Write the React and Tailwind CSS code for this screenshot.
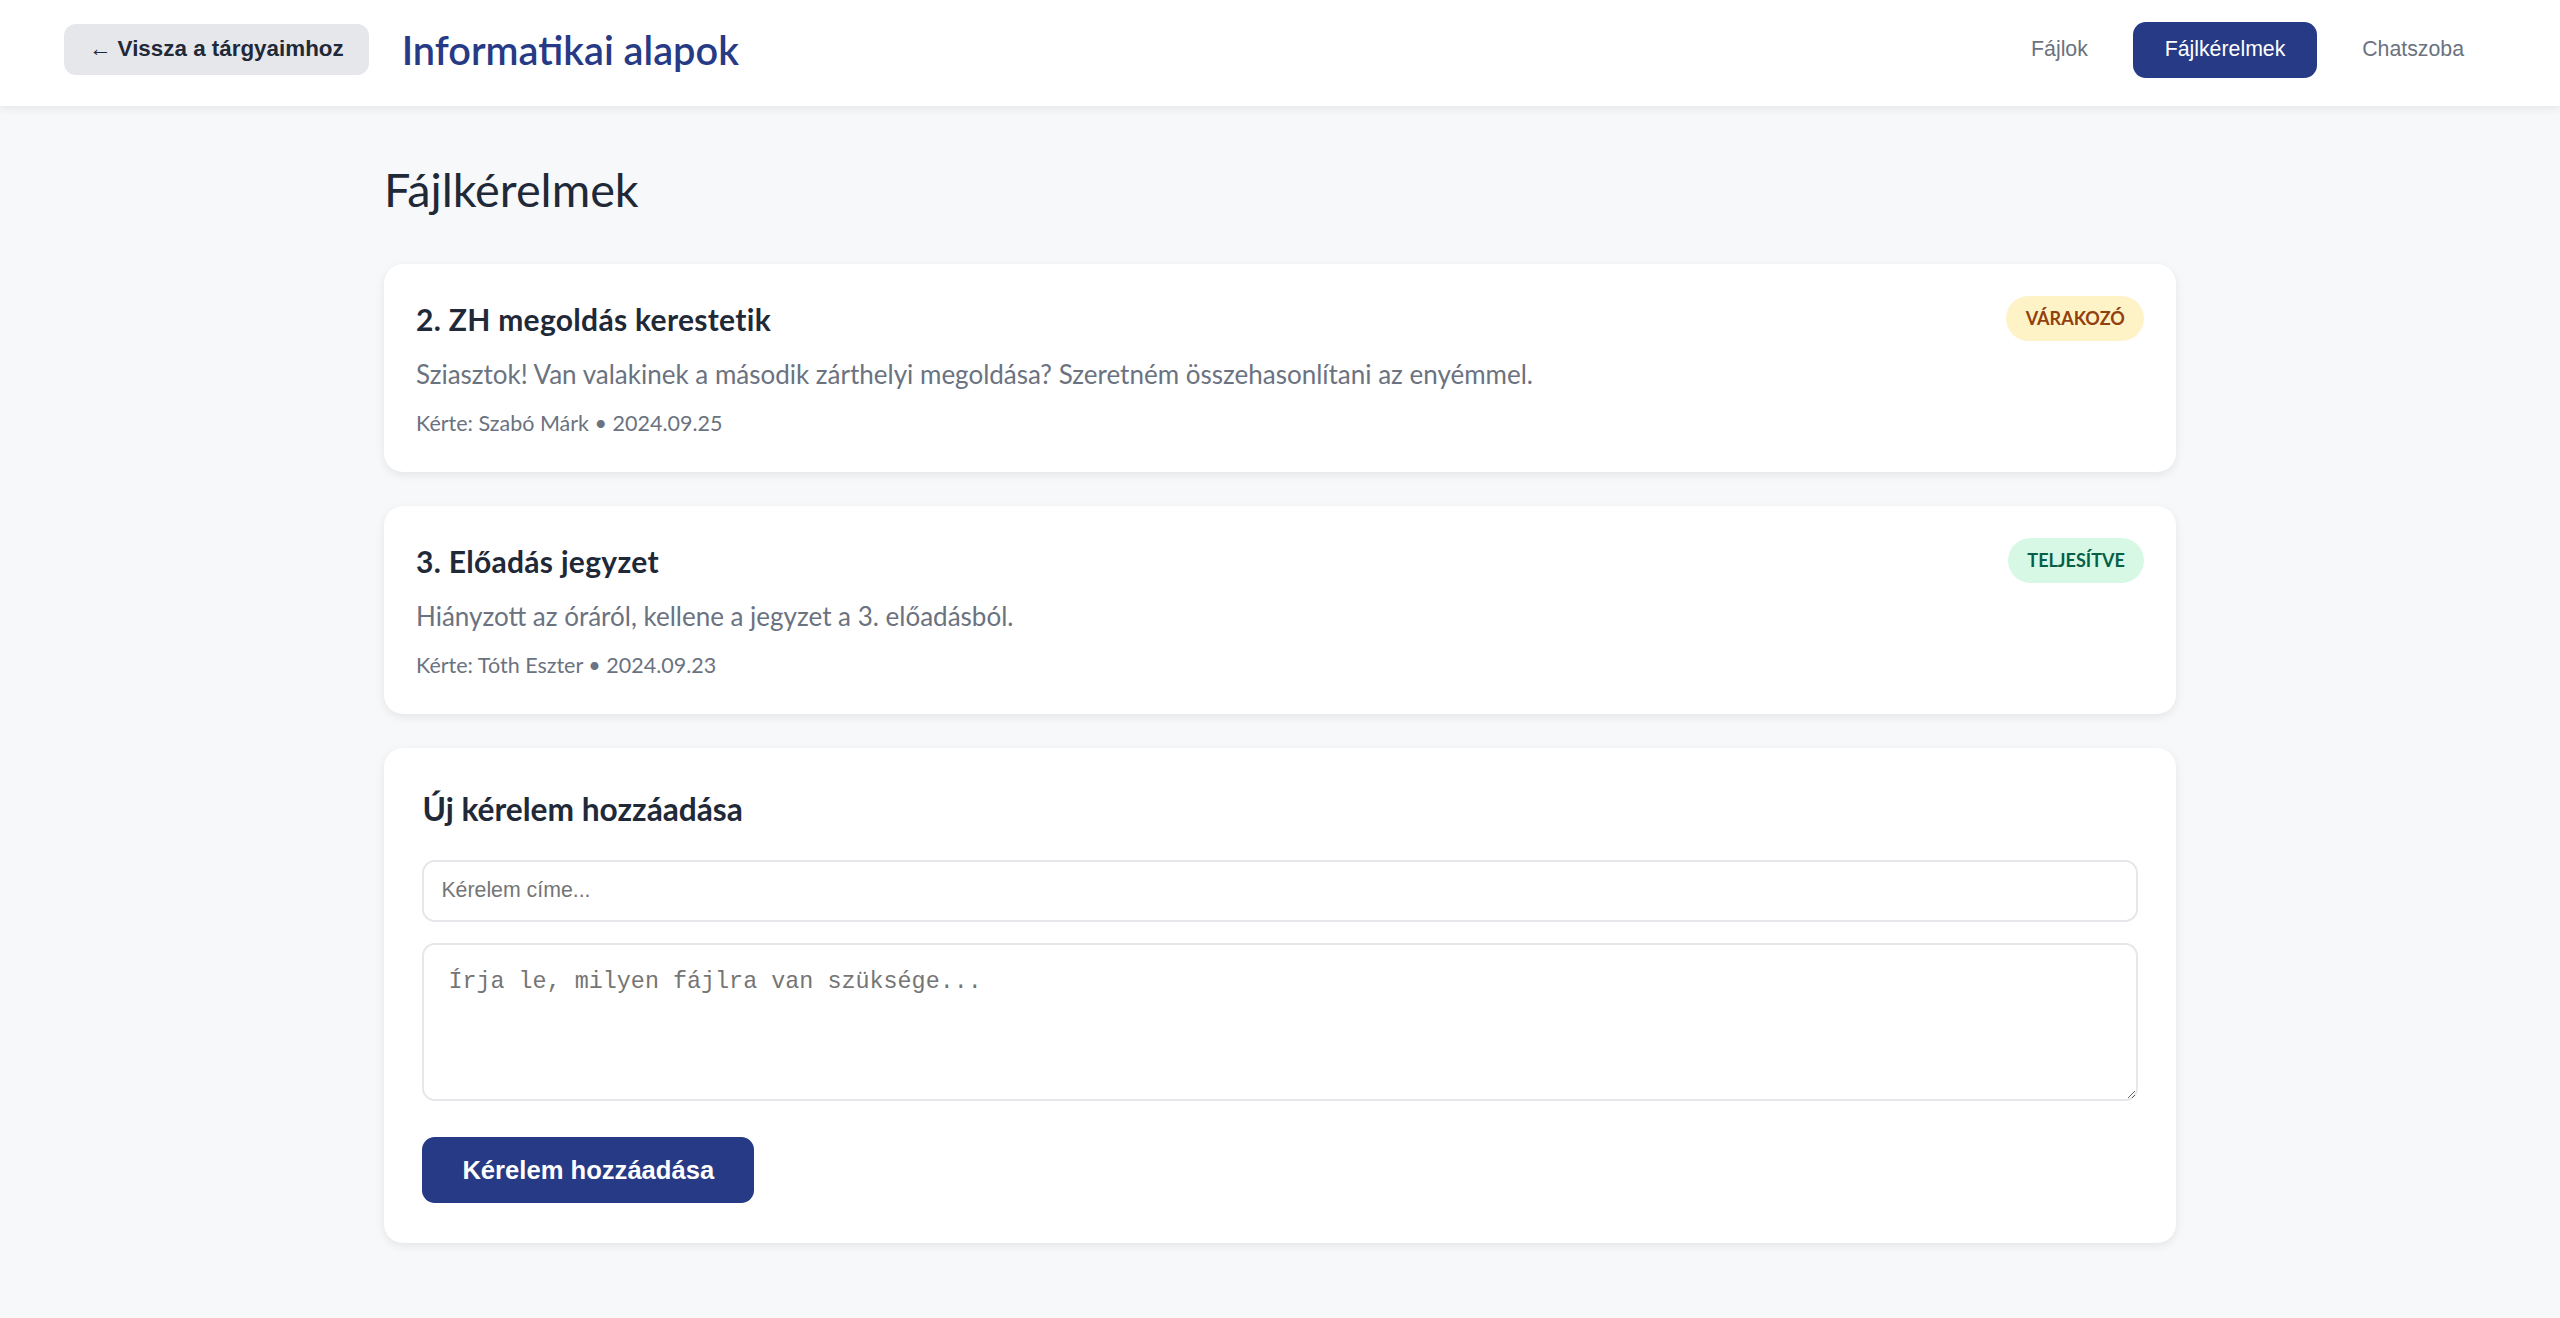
import React from "react"

// ==================== adatok ====================
const requests = [
  {
    id: 2,
    title: "2. ZH megoldás kerestetik",
    text: "Sziasztok! Van valakinek a második zárthelyi megoldása? Szeretném összehasonlítani az enyémmel.",
    by: "Szabó Márk",
    date: "2024.09.25",
    status: "pending",
  },
  {
    id: 3,
    title: "3. Előadás jegyzet",
    text: "Hiányzott az óráról, kellene a jegyzet a 3. előadásból.",
    by: "Tóth Eszter",
    date: "2024.09.23",
    status: "done",
  },
]

const statusStyles = {
  pending: { label: "Várakozó", cls: "bg-[#fef3c7] text-[#92400e]" },
  done: { label: "Teljesítve", cls: "bg-[#d8f8e6] text-[#065f46]" },
}

// ==================== fejléc ====================
function Header() {
  return (
    <header className="h-[106px] bg-white shadow-[0_3px_8px_rgba(0,0,0,0.07)] flex items-center justify-between px-[64px] pb-[7px]">
      <div className="flex items-center gap-[33px]">
        <button className="h-[51px] px-[25px] rounded-[12px] bg-[#e5e7eb] text-[#1f2937] font-['Liberation_Sans',Arial,sans-serif] font-bold text-[22.4px] leading-none">
          <span className="font-normal">←</span> Vissza a tárgyaimhoz
        </button>
        <h1 className="text-[39.7px] leading-[51px] font-semibold text-[#273a85]">
          Informatikai alapok
        </h1>
      </div>
      <nav className="flex items-center gap-[12.8px] font-['Liberation_Sans',Arial,sans-serif] text-[21.3px]">
        <button className="h-[56px] px-[32px] rounded-[12.8px] text-[#6b7280]">Fájlok</button>
        <button className="h-[56px] px-[32px] rounded-[12.8px] bg-[#273a85] text-white">Fájlkérelmek</button>
        <button className="h-[56px] px-[32px] rounded-[12.8px] text-[#6b7280]">Chatszoba</button>
      </nav>
    </header>
  )
}

// ==================== kérelem kártya ====================
function RequestCard({ item }) {
  const status = statusStyles[item.status]
  return (
    <div className="bg-white rounded-[19px] shadow-[0_3px_10px_rgba(0,0,0,0.08)] p-[32px]">
      <div className="flex items-start justify-between">
        <h3 className="text-[30px] tracking-[0.3px] leading-[47px] font-bold text-[#1f2937]">{item.title}</h3>
        <span className={"h-[45px] px-[19.2px] rounded-full flex items-center text-[18px] font-bold uppercase " + status.cls}>
          {status.label}
        </span>
      </div>
      <p className="mt-[12.8px] text-[26px] leading-[37.2px] text-[#6b7280]">{item.text}</p>
      <p className="mt-[13.8px] text-[21.5px] leading-[33.6px] text-[#6b7280]">
        Kérte: {item.by} • {item.date}
      </p>
    </div>
  )
}

// ==================== új kérelem ====================
function NewRequest() {
  return (
    <div className="bg-white rounded-[19px] shadow-[0_3px_10px_rgba(0,0,0,0.08)] p-[38.4px] pb-[39.4px]">
      <h3 className="text-[31.7px] leading-[47px] font-bold text-[#1f2937]">Új kérelem hozzáadása</h3>
      <input
        type="text"
        placeholder="Kérelem címe..."
        className="mt-[26.6px] block w-full h-[62px] px-[17px] border-2 border-[#e5e7eb] rounded-[12.8px] font-['Liberation_Sans',Arial,sans-serif] text-[21.3px] placeholder:text-[#757575] outline-none"
      />
      <textarea
        placeholder="Írja le, milyen fájlra van szüksége..."
        className="mt-[21.4px] block w-full h-[158px] px-[24px] py-[24px] border-2 border-[#e5e7eb] rounded-[12.8px] font-['Liberation_Mono','DejaVu_Sans_Mono',monospace] text-[23.4px] leading-[1.15] placeholder:text-[#757575] outline-none"
      />
      <button className="mt-[35.7px] h-[66.6px] px-[40px] rounded-[12.8px] bg-[#273a85] text-white font-['Liberation_Sans',Arial,sans-serif] font-bold text-[25.6px]">
        Kérelem hozzáadása
      </button>
    </div>
  )
}

export default function App() {
  return (
    <div className="min-h-screen bg-[#f7f8fa] font-['Lato','Noto_Sans',sans-serif]">
      <Header />
      <main className="w-[1792px] mx-auto pt-[55px] pb-[60px]">
        <h2 className="text-[46.8px] leading-[57.6px] font-normal text-[#1f2937] mb-[45.4px]">Fájlkérelmek</h2>
        <div className="flex flex-col gap-[33.5px]">
          {requests.map((r) => (
            <RequestCard key={r.id} item={r} />
          ))}
          <NewRequest />
        </div>
      </main>
    </div>
  )
}
